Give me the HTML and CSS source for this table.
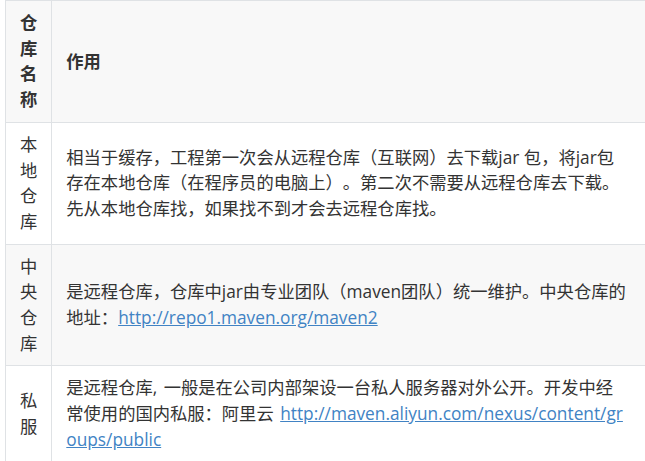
FILE: index.html
```html
<!DOCTYPE html>
<html lang="zh-CN">
<head>
<meta charset="utf-8">
<title>仓库</title>
<link rel="stylesheet" href="styles.css">
</head>
<body>
<table class="repo-table">
  <thead>
    <tr>
      <th class="name-col">仓库名称</th>
      <th class="desc-col">作用</th>
    </tr>
  </thead>
  <tbody>
    <tr>
      <td class="name-col">本地仓库</td>
      <td class="desc-col">相当于缓存，工程第一次会从远程仓库（互联网）去下载jar 包，将jar包存在本地仓库（在程序员的电脑上）。第二次不需要从远程仓库去下载。先从本地仓库找，如果找不到才会去远程仓库找。</td>
    </tr>
    <tr class="alt">
      <td class="name-col">中央仓库</td>
      <td class="desc-col">是远程仓库，仓库中jar由专业团队（maven团队）统一维护。中央仓库的地址：<a class="link" href="#">http://repo1.maven.org/maven2</a></td>
    </tr>
    <tr>
      <td class="name-col">私服</td>
      <td class="desc-col gap">是远程仓库, 一般是在公司内部架设一台私人服务器对外公开。开发中经常使用的国内私服：阿里云 <a class="link break" href="#">http://maven.aliyun.com/nexus/content/groups/public</a></td>
    </tr>
  </tbody>
</table>
</body>
</html>
```
FILE: styles.css
```css
html {
  overflow: hidden;
}
body {
  margin: 0;
  width: 720px;
  background: #ffffff;
  font-family: "Open Sans", "Noto Sans CJK SC", sans-serif;
  font-size: 17.3px;
  line-height: 25.7px;
  color: #333333;
  text-spacing-trim: space-all;
}
.repo-table {
  border-collapse: collapse;
  margin-left: 5px;
  table-layout: auto;
}
.repo-table th,
.repo-table td {
  border: 1px solid #dfe2e5;
  padding: 9px 14px;
  text-align: left;
  vertical-align: middle;
}
.repo-table th {
  font-weight: bold;
  background: #f8f8f8;
}
.repo-table .alt {
  background: #f8f8f8;
}
.name-col {
  width: 1px;
  word-break: break-all;
}
.repo-table .desc-col {
  width: 562px;
  padding-right: 22px;
}
.repo-table .gap {
  word-spacing: 2px;
}
.link {
  color: #4183c4;
  text-decoration: underline;
}
.break {
  word-break: break-all;
}
```
